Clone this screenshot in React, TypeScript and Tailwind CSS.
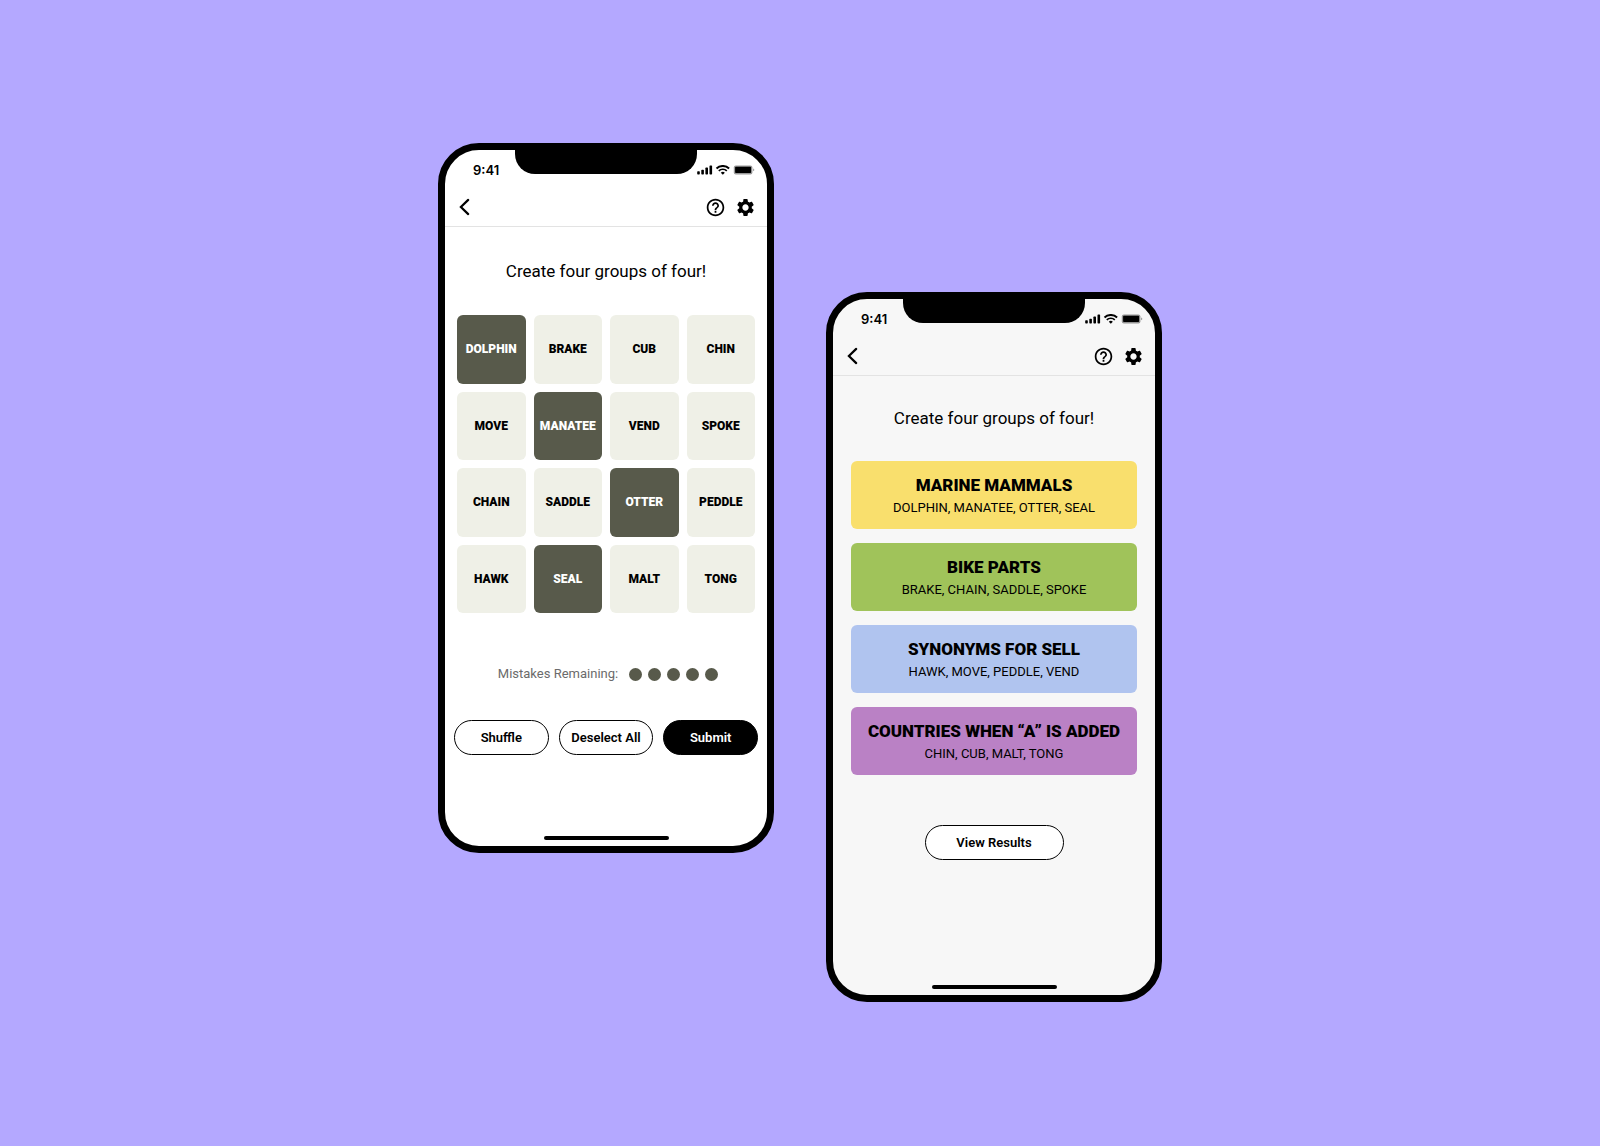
import React, { useState } from "react";
import { MdHelpOutline, MdSettings } from "react-icons/md";
import clsx from "clsx";

const INITIAL_WORDS = [
  "DOLPHIN", "BRAKE", "CUB", "CHIN",
  "MOVE", "MANATEE", "VEND", "SPOKE",
  "CHAIN", "SADDLE", "OTTER", "PEDDLE",
  "HAWK", "SEAL", "MALT", "TONG",
];

const GROUPS = [
  { title: "MARINE MAMMALS", words: "DOLPHIN, MANATEE, OTTER, SEAL", color: "bg-[#f9df6d]" },
  { title: "BIKE PARTS", words: "BRAKE, CHAIN, SADDLE, SPOKE", color: "bg-[#a0c35a]" },
  { title: "SYNONYMS FOR SELL", words: "HAWK, MOVE, PEDDLE, VEND", color: "bg-[#b0c4ef]" },
  { title: "COUNTRIES WHEN “A” IS ADDED", words: "CHIN, CUB, MALT, TONG", color: "bg-[#ba81c5]" },
];

const StatusBar: React.FC = () => (
  <div className="relative flex h-[39px] items-center justify-between pl-7 pr-3">
    <span className="font-['Inter',sans-serif] text-[13px] leading-4 font-semibold">9:41</span>
    {/* Notch */}
    <div className="absolute top-0 left-1/2 h-6 w-[182px] -translate-x-1/2 rounded-b-[20px] bg-black" />
    <svg width="58" height="10" viewBox="0 0 58 10" aria-hidden="true">
      {/* Signal */}
      <rect x="0.2" y="6.2" width="2.6" height="3.2" rx="0.7" />
      <rect x="4.3" y="4.7" width="2.6" height="4.7" rx="0.7" />
      <rect x="8.4" y="2.6" width="2.6" height="6.8" rx="0.7" />
      <rect x="12.5" y="0.4" width="2.6" height="9" rx="0.7" />
      {/* Wifi */}
      <path d="M19.500 3.500a9 9 0 0 1 12.600 0" fill="none" stroke="#000" strokeWidth="1.9" />
      <path d="M21.800 5.900a5.700 5.700 0 0 1 8 0" fill="none" stroke="#000" strokeWidth="1.7" />
      <path d="M25.800 9.800l-2-2.100a2.900 2.900 0 0 1 4 0z" />
      {/* Battery */}
      <rect x="36.800" y="0.400" width="18.600" height="9" rx="2" fillOpacity="0.4" />
      <rect x="38.100" y="1.700" width="16" height="6.400" rx="0.800" />
      <path d="M56.100 3.500c.8.300 1.200.8 1.200 1.400s-.4 1.100-1.200 1.400z" fillOpacity="0.4" />
    </svg>
  </div>
);

const NavBar: React.FC = () => (
  <header className="flex h-[38px] items-center justify-between border-b border-[#e3e3e3] pr-[11px] pb-px pl-[13px]">
    <button type="button" aria-label="Back">
      <svg
        width="12"
        height="18"
        viewBox="0 0 12 18"
        fill="none"
        stroke="#000"
        strokeWidth="2.2"
        strokeLinecap="round"
        aria-hidden="true"
      >
        <path d="M10.200 1.900L2.900 9l7.300 7.100" />
      </svg>
    </button>
    <div className="flex items-center gap-[9px]">
      <button type="button" aria-label="Help">
        <MdHelpOutline size={21} />
      </button>
      <button type="button" aria-label="Settings">
        <MdSettings size={21} />
      </button>
    </div>
  </header>
);

const Phone: React.FC<{ className?: string; children: React.ReactNode }> = ({ className, children }) => (
  <section
    className={clsx(
      "flex min-h-[710px] w-[336px] flex-col rounded-[41px] border-[7px] border-black text-black",
      className
    )}
  >
    <StatusBar />
    <NavBar />
    {children}
    {/* Home indicator */}
    <div className="mx-auto mt-auto mb-1.5 h-1 w-[125px] rounded-full bg-black" />
  </section>
);

const buttonClass = "h-[35px] rounded-full border border-black text-[13px] font-semibold";

const GameScreen: React.FC = () => {
  const [words, setWords] = useState(INITIAL_WORDS);
  const [selected, setSelected] = useState(["DOLPHIN", "MANATEE", "OTTER", "SEAL"]);

  const toggle = (word: string) => {
    if (selected.includes(word)) {
      setSelected(selected.filter((w) => w !== word));
    } else if (selected.length < 4) {
      setSelected([...selected, word]);
    }
  };

  const shuffle = () => setWords([...words].sort(() => Math.random() - 0.5));

  return (
    <Phone className="bg-white">
      <h1 className="mt-8 text-center text-[17px] leading-6">Create four groups of four!</h1>

      <div className="mt-8 grid grid-cols-4 gap-2 px-3">
        {words.map((word) => (
          <button
            key={word}
            type="button"
            aria-pressed={selected.includes(word)}
            onClick={() => toggle(word)}
            className={clsx(
              "aspect-square rounded-md text-[12px] font-black",
              selected.includes(word) ? "bg-[#585a4b] text-white" : "bg-[#eff0e7]"
            )}
          >
            {word}
          </button>
        ))}
      </div>

      <div className="mt-[51px] flex items-center justify-center gap-[11px] pl-1">
        <span className="text-[13px] leading-5 text-[#6b6b6b]">Mistakes Remaining:</span>
        <div className="flex gap-1.5">
          {[0, 1, 2, 3, 4].map((i) => (
            <span key={i} className="size-[13px] rounded-full bg-[#585a4b]" />
          ))}
        </div>
      </div>

      <div className="mt-9 grid grid-cols-3 gap-2.5 px-[9px]">
        <button type="button" onClick={shuffle} className={buttonClass}>
          Shuffle
        </button>
        <button type="button" onClick={() => setSelected([])} className={buttonClass}>
          Deselect All
        </button>
        <button type="button" className={clsx(buttonClass, "bg-black text-white")}>
          Submit
        </button>
      </div>
    </Phone>
  );
};

const ResultScreen: React.FC = () => (
  <Phone className="mt-[149px] bg-[#f7f7f7]">
    <h1 className="mt-[30px] text-center text-[17px] leading-6">Create four groups of four!</h1>

    <div className="mt-[31px] flex flex-col gap-[14px] px-[18px]">
      {GROUPS.map((group) => (
        <div
          key={group.title}
          className={clsx("flex h-[68px] flex-col items-center justify-center rounded-md pt-px", group.color)}
        >
          <h2 className="text-[17px] leading-6 font-black whitespace-nowrap">{group.title}</h2>
          <p className="text-[13px] leading-[22px]">{group.words}</p>
        </div>
      ))}
    </div>

    <button type="button" className={clsx(buttonClass, "mx-auto mt-[50px] w-[139px] bg-white")}>
      View Results
    </button>
  </Phone>
);

const App: React.FC = () => {
  return (
    <main className="flex min-h-screen items-start justify-center gap-[52px] bg-[#b4a8ff] pt-[143px] font-['Roboto',sans-serif]">
      <GameScreen />
      <ResultScreen />
    </main>
  );
};

export default App;
